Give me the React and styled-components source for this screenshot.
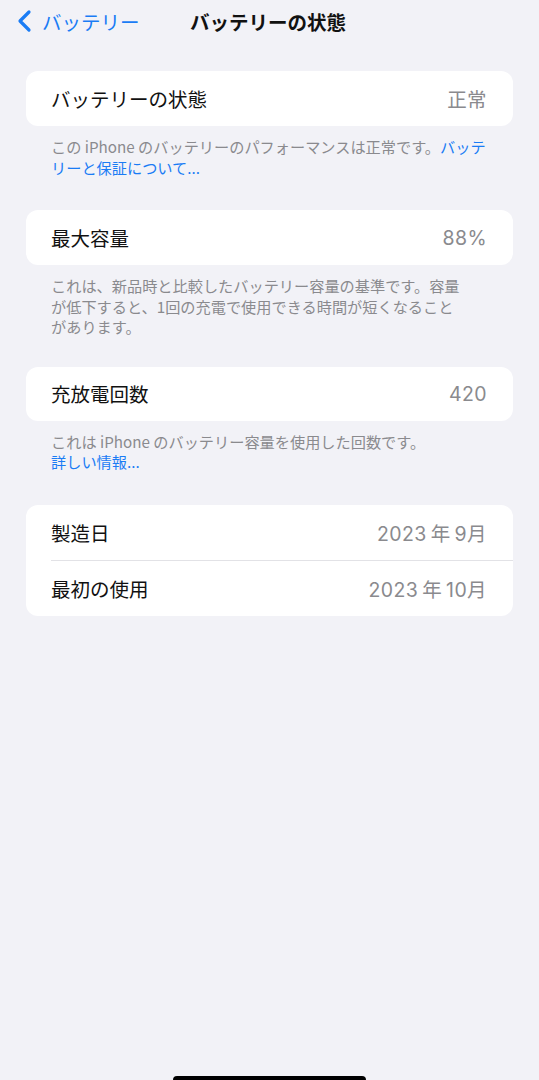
import React from 'react'
import styled, { createGlobalStyle } from 'styled-components'

const GlobalStyle = createGlobalStyle`
  html, body {
    margin: 0;
    padding: 0;
    background: #f2f2f7;
  }
  body {
    font-family: "Noto Sans CJK JP", "Noto Sans", "Liberation Sans", sans-serif;
    -webkit-font-smoothing: antialiased;
  }
`

const Screen = styled.div`
  position: relative;
  width: 539px;
  height: 1080px;
  background: #f2f2f7;
  overflow: hidden;
`

const NavBar = styled.div`
  position: relative;
  height: 42px;
  display: flex;
  align-items: center;
  justify-content: center;
`

const Back = styled.div`
  position: absolute;
  left: 16px;
  top: 0;
  height: 42px;
  display: flex;
  align-items: center;
  gap: 10px;
  color: #1a7cf5;
  font-size: 19.5px;
`

const Title = styled.div`
  font-size: 19.5px;
  font-weight: 700;
  color: #111;
  margin-left: -3px;
`

const Content = styled.div`
  padding: 29px 26px 0;
`

const Section = styled.div`
  margin-bottom: ${p => p.$gap || 33}px;
`

const Card = styled.div`
  background: #fff;
  border-radius: 12px;
  overflow: hidden;
`

const Row = styled.div`
  height: ${p => p.$h || 55}px;
  display: flex;
  align-items: center;
  justify-content: space-between;
  padding: 0 26px 0 25px;
  font-size: 19.5px;
  position: relative;
  ${p => p.$divider && `
    &::after {
      content: '';
      position: absolute;
      left: 25px;
      right: 0;
      bottom: 0;
      height: 1px;
      background: #e2e2e6;
    }
  `}
`

const Label = styled.span`
  color: #111;
`

const Value = styled.span`
  color: #8a8a8e;
  font-family: "Inter", "Noto Sans CJK JP", sans-serif;
  letter-spacing: 0.4px;
`

const Footer = styled.div`
  padding: 10px 25px 0;
  font-size: 15.2px;
  line-height: 20.5px;
  color: #8a8a8e;
`

const Link = styled.span`
  color: #1a7cf5;
`

const HomeIndicator = styled.div`
  position: absolute;
  left: 173px;
  bottom: -4px;
  width: 193px;
  height: 8px;
  border-radius: 4px;
  background: #000;
`

function Chevron() {
  return (
    <svg width="16" height="24" viewBox="0 0 16 24">
      <path d="M13 3 L4 12 L13 21" fill="none" stroke="#1a7cf5" strokeWidth="3.2" strokeLinecap="round" strokeLinejoin="round" />
    </svg>
  )
}

export default function App() {
  return (
    <Screen>
      <GlobalStyle />
      <NavBar>
        <Back>
          <Chevron />
          <span>バッテリー</span>
        </Back>
        <Title>バッテリーの状態</Title>
      </NavBar>
      <Content>
        <Section>
          <Card>
            <Row>
              <Label>バッテリーの状態</Label>
              <Value>正常</Value>
            </Row>
          </Card>
          <Footer>
            この iPhone のバッテリーのパフォーマンスは正常です。<Link>バッテ<br />リーと保証について...</Link>
          </Footer>
        </Section>
        <Section $gap={30}>
          <Card>
            <Row>
              <Label>最大容量</Label>
              <Value>88%</Value>
            </Row>
          </Card>
          <Footer>
            これは、新品時と比較したバッテリー容量の基準です。容量<br />
            が低下すると、1回の充電で使用できる時間が短くなること<br />
            があります。
          </Footer>
        </Section>
        <Section>
          <Card>
            <Row $h={54}>
              <Label>充放電回数</Label>
              <Value>420</Value>
            </Row>
          </Card>
          <Footer>
            これは iPhone のバッテリー容量を使用した回数です。<br />
            <Link>詳しい情報...</Link>
          </Footer>
        </Section>
        <Section>
          <Card>
            <Row $h={56} $divider>
              <Label>製造日</Label>
              <Value>{'2023\u2009年\u20099月'}</Value>
            </Row>
            <Row $h={55}>
              <Label>最初の使用</Label>
              <Value>{'2023\u2009年\u200910月'}</Value>
            </Row>
          </Card>
        </Section>
      </Content>
      <HomeIndicator />
    </Screen>
  )
}
